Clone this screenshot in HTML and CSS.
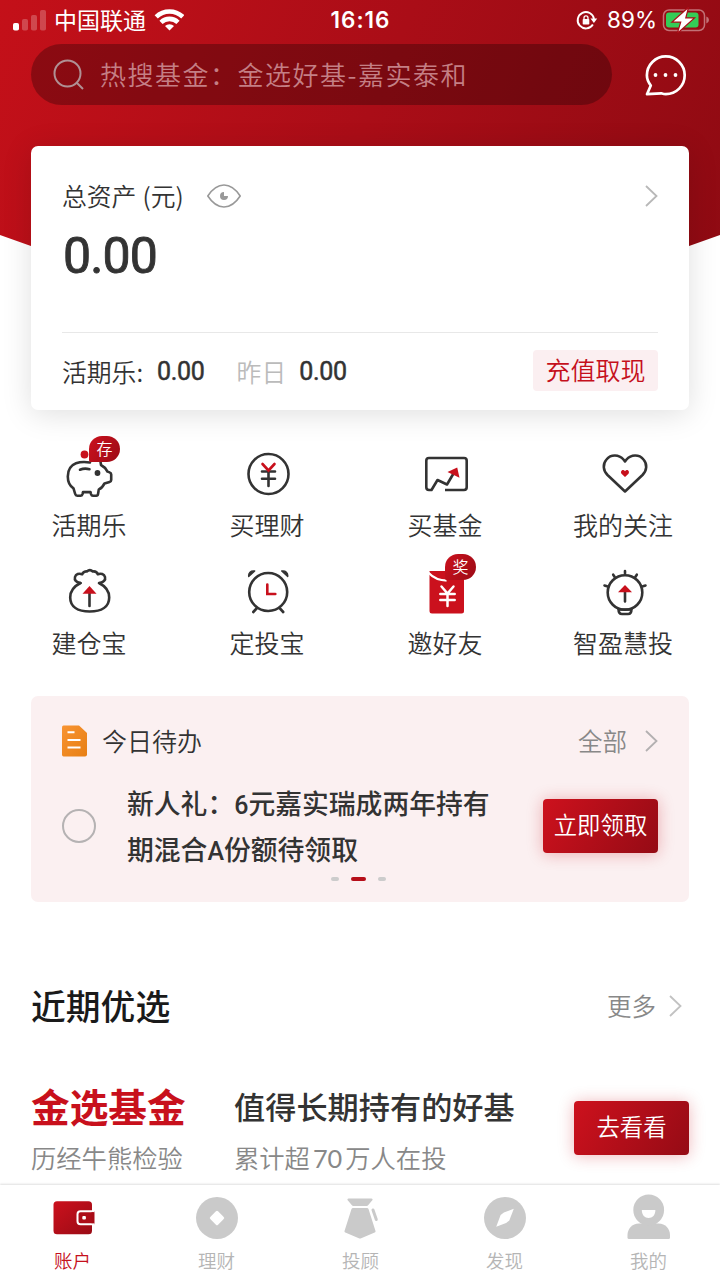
FILE: index.html
```html
<!DOCTYPE html>
<html lang="zh-CN">
<head>
<meta charset="utf-8">
<title>账户</title>
<link rel="stylesheet" href="styles.css">
</head>
<body>
<div class="app">
  <div class="backdrop"></div>

  <header class="status">
    <div class="status-side">
      <svg class="ic" width="36" height="24" viewBox="11 7 36 24">
        <rect x="13" y="22" width="6" height="7.5" rx="1.8" fill="#fff"/>
        <g fill="#fff" opacity=".23"><rect x="22" y="18" width="6" height="11.5" rx="1.8"/><rect x="31" y="14" width="6" height="15.5" rx="1.8"/><rect x="40" y="9" width="6" height="20.500" rx="1.8"/></g>
      </svg>
      <span class="carrier">中国联通</span>
      <svg class="ic" width="30" height="24" viewBox="155 7.500 30 24" fill="none" stroke="#fff" stroke-width="4.600">
        <path d="M157.200 16.300a19.300 19.300 0 0 1 26.600 0"/>
        <path d="M162 21.800a12.300 12.300 0 0 1 17 0"/>
        <path d="M170.500 30l-4.500-4.400a6.300 6.300 0 0 1 9 0z" fill="#fff" stroke="none"/>
      </svg>
    </div>
    <span class="clock">16:16</span>
    <div class="status-side status-right">
      <svg class="ic" width="24" height="22" viewBox="576 9 24 22" fill="none" stroke="#fff" stroke-width="1.900">
        <path d="M593.900 24.500A8.200 8.200 0 1 1 595 19"/>
        <path d="M591.500 18.500h6.700l-3.300 4.500z" fill="#fff" stroke="none"/>
        <rect x="583.700" y="19" width="6.600" height="5.500" rx=".8" fill="#fff" stroke="none"/>
        <path d="M585 19.500v-1.600a2 2 0 0 1 4 0v1.600" stroke-width="1.300"/>
      </svg>
      <span class="percent">89%</span>
      <svg class="ic" width="49" height="26" viewBox="661 6.500 49 26">
        <rect x="663.500" y="9.500" width="41" height="20.500" rx="5.500" fill="none" stroke="#fff" stroke-opacity=".42" stroke-width="1.500"/>
        <path d="M706.300 16v7q2.700-.8 2.700-3.500t-2.700-3.500z" fill="#fff" opacity=".42"/>
        <rect x="666" y="12" width="32.500" height="15" rx="3" fill="#34cc56"/>
        <path d="M687.500 8.500l-14 12.500h8l-3 10 14.500-13h-8z" fill="#fff" stroke="#a90d17" stroke-width="2.400" paint-order="stroke"/>
      </svg>
    </div>
  </header>

  <div class="search-row">
    <div class="search">
      <svg class="ic" width="34" height="34" viewBox="52 58 34 34" fill="none" stroke="#b09094" stroke-width="2">
        <circle cx="67.500" cy="73.500" r="13"/><path d="M77 83l6 6"/>
      </svg>
      <span>热搜基金：金选好基-嘉实泰和</span>
    </div>
    <svg class="ic" width="44" height="44" viewBox="644.500 53 44 44" fill="none" stroke="#fff" stroke-width="2.700" stroke-linejoin="round">
      <path d="M651.300 85.500C648.500 82 647.400 79 647.400 75.300a18.900 18.900 0 1 1 18.900 18.900c-1.700 0-3-.4-4.600-.9l-14.200.9z"/>
      <g fill="#fff" stroke="none"><circle cx="656" cy="75" r="1.900"/><circle cx="666" cy="75" r="1.900"/><circle cx="676" cy="75" r="1.900"/></g>
    </svg>
  </div>

  <section class="asset">
    <div class="asset-head">
      <span class="asset-title">总资产<i class="paren">(</i>元<i class="paren">)</i></span>
      <svg class="ic" width="36" height="26" viewBox="206 183 36 26" fill="none" stroke="#999" stroke-width="1.600">
        <path d="M207.800 196q7.200-11 16.200-11t16.200 11q-7.200 11-16.200 11t-16.200-11z" stroke-linejoin="round"/>
        <path d="M224 192a4 4 0 1 0 4 4h-4z" fill="#999" stroke="none"/>
      </svg>
      <svg class="ic push" width="14" height="24" viewBox="644 184 14 24" fill="none" stroke="#b8b8b8" stroke-width="1.800"><path d="M646 186l10.500 10-10.500 10"/></svg>
    </div>
    <div class="total">0.00</div>
    <div class="asset-foot">
      <span class="lift">活期乐:</span><span class="num first">0.00</span>
      <span class="muted lift">昨日</span><span class="num">0.00</span>
      <button class="cash">充值取现</button>
    </div>
  </section>

  <nav class="shortcuts">
    <a class="shortcut">
      <svg class="ic" width="60" height="60" viewBox="59 443 60 60" fill="none" stroke="#333" stroke-width="2.600" stroke-linejoin="round" stroke-linecap="round">
        <path d="M90 462.500c-4-.7-10-.7-14 .8-5 2-8.200 7-8.200 13.200 0 5 2 9.500 5.700 11.800l1.700 5.700q.5 1.700 2 1.700h3.300q1.500 0 2-1.600l.5-2h7.500l.5 2q.5 1.600 2 1.600h3.300q1.500 0 1.700-1.500l.8-4.800c2.500-1 4.500-3.500 5.700-6l5-1.500q1.700-.5 1.700-2v-5.300q0-1.800-1.500-2.200l-2.200-.8c-1.500-3-4-5.300-6.500-6.600l-.6-4"/>
        <path d="M80 469.700q4.500-1.800 9.500-.5"/>
        <circle cx="97.500" cy="473" r="2.900" fill="#333" stroke="none"/><circle cx="84.500" cy="454.500" r="3.900" fill="#c8101c" stroke="none"/>
      </svg>
      <b class="badge">存</b>
      <span>活期乐</span>
    </a>
    <a class="shortcut">
      <svg class="ic" width="60" height="60" viewBox="237 443 60 60" fill="none" stroke="#333" stroke-width="2.600" stroke-linecap="round">
        <circle cx="268.500" cy="474" r="20"/>
        <path d="M262 471.500h13M262 478.800h13M268.500 471.500v14.500"/><path d="M262.500 464l6 6.500 6-6.500" stroke="#c8101c"/>
      </svg>
      <span>买理财</span>
    </a>
    <a class="shortcut">
      <svg class="ic" width="60" height="60" viewBox="415 443 60 60" fill="none" stroke="#333" stroke-width="2.600" stroke-linejoin="round">
        <path d="M445 490h19q2.700 0 2.700-2.700v-26.600q0-2.700-2.700-2.700h-35q-2.700 0-2.700 2.700v26.600q0 2.700 2.700 2.700h2.500l6-10 9.500 4.500 6.500-11"/>
        <path d="M447.500 472l9.700-4.500 2.300 10.200z" fill="#c8101c" stroke="none"/>
      </svg>
      <span>买基金</span>
    </a>
    <a class="shortcut">
      <svg class="ic" width="60" height="60" viewBox="593 443 60 60" fill="none" stroke="#333" stroke-width="2.600" stroke-linejoin="round">
        <path d="M625 491.500L607.500 475C603 470.500 602.500 464 606.500 459.500c4.500-5.500 12.500-5 17 0l1.500 2 1.500-2c4.500-5 12.500-5.500 17 0 4 4.500 3.500 11-1 15.500z"/>
        <path d="M625 477l-3.500-3.300c-1.800-2.700 1.700-5.200 3.500-2.500 1.800-2.700 5.300-.2 3.500 2.500z" fill="#c8101c" stroke="none"/>
      </svg>
      <span>我的关注</span>
    </a>
    <a class="shortcut">
      <svg class="ic" width="60" height="60" viewBox="59 561 60 60" fill="none" stroke="#333" stroke-width="2.600" stroke-linejoin="round" stroke-linecap="round">
        <path d="M80.500 583c-4.500-.5-6.300-3-5.500-6 .8-3 4-4 7.200-2.800 1-2.700 3.800-3 4.600-2.700 2-1.700 4.200-1.700 6 0 1.800-.3 4 .3 5 2.700 3-1.200 6.400-.2 7.200 2.800.8 3-1.500 5.500-5.500 6"/>
        <path d="M80.500 583c-6 3-10.300 8.500-10.300 14.500 0 9.300 7.600 14 19.500 14s19.500-4.700 19.500-14c0-6-4.200-11.500-10.200-14.500"/>
        <path d="M89.500 593v13"/><path d="M89.500 586l7 7.700h-14z" fill="#c8101c" stroke="none"/>
      </svg>
      <span>建仓宝</span>
    </a>
    <a class="shortcut">
      <svg class="ic" width="60" height="60" viewBox="237 561 60 60" fill="none" stroke="#333" stroke-width="2.600" stroke-linecap="round">
        <circle cx="268.200" cy="592" r="19"/><path d="M256.500 608.500l-3.200 3.500M280 608.500l3.200 3.500"/>
        <path d="M248.700 576.500c-.5-3.500 2-6.200 6-5.500zM287.700 576.500c.5-3.500-2-6.200-6-5.500z" fill="#333" stroke-width="1.400" stroke-linejoin="round"/>
        <path d="M267.300 584.500v9.500h8" stroke="#c8101c"/>
      </svg>
      <span>定投宝</span>
    </a>
    <a class="shortcut">
      <svg class="ic" width="60" height="60" viewBox="414.500 561 60 60">
        <path d="M431.500 571h30q2 0 2 2v38q0 2.500-2.500 2.500h-29.500q-2.500 0-2.500-2.500v-40z" fill="#cb111d"/>
        <path d="M428 572.800q7.500 8.200 20 7.700h15" fill="none" stroke="#fff" stroke-width="2.200"/>
        <path d="M446 578h17.500v5h-17.500z" fill="#cb111d"/>
        <path d="M441 586.500l6 7 6-7M439.800 594h14.400M439.800 600h14.400M447 593v13" fill="none" stroke="#fff" stroke-width="2.500" stroke-linecap="round"/>
      </svg>
      <b class="badge">奖</b>
      <span>邀好友</span>
    </a>
    <a class="shortcut">
      <svg class="ic" width="60" height="60" viewBox="593 561 60 60" fill="none" stroke="#333" stroke-width="2.600" stroke-linecap="round">
        <circle cx="625" cy="592.500" r="17.300"/><path d="M618.500 609q0 5 3.500 5h6q3.500 0 3.500-5M620 609.500h10"/>
        <path d="M625 571v2.500M613.200 574.700l1.500 2.300M636.800 574.700l-1.500 2.300M604.500 585.500l2.500.8M645.500 585.500l-2.500.8M625 592v9.500"/>
        <path d="M625 585l7 7.200h-14z" fill="#c8101c" stroke="none"/>
      </svg>
      <span>智盈慧投</span>
    </a>
  </nav>

  <section class="todo">
    <div class="todo-head">
      <svg class="ic" width="26" height="32" viewBox="62 725.500 26 32">
        <defs><linearGradient id="og" x1="0" y1="0" x2="1" y2="1"><stop offset="0" stop-color="#f89432"/><stop offset="1" stop-color="#e77f14"/></linearGradient></defs>
        <path d="M63.500 726h15.500l8 7.500v21.500q0 2-2 2h-21.500q-1.500 0-1.500-2v-27q0-2 1.500-2z" fill="url(#og)"/>
        <path d="M67.500 732.800h7M67.500 740.500h13M67.500 748h13" stroke="#fff" stroke-width="2"/>
      </svg>
      <span class="todo-title lift">今日待办</span>
      <a class="more lift">全部</a>
      <svg class="ic" width="14" height="24" viewBox="644 184 14 24" fill="none" stroke="#b3b0b1" stroke-width="1.800"><path d="M646 186l10.500 10-10.500 10"/></svg>
    </div>
    <div class="todo-body">
      <i class="radio"></i>
      <p>新人礼：<i class="latin">6</i>元嘉实瑞成两年持有<br>期混合<i class="latin">A</i>份额待领取</p>
      <button class="primary claim">立即领取</button>
    </div>
    <div class="dots"><i></i><i class="on"></i><i></i></div>
  </section>

  <section class="picks">
    <div class="picks-head">
      <h2>近期优选</h2>
      <a class="more lift">更多</a>
      <svg class="ic" width="14" height="24" viewBox="644 184 14 24" fill="none" stroke="#c2c2c2" stroke-width="1.800"><path d="M646 186l10.500 10-10.500 10"/></svg>
    </div>
    <div class="pick">
      <div class="pick-name"><strong>金选基金</strong><small>历经牛熊检验</small></div>
      <div class="pick-desc"><strong>值得长期持有的好基</strong><small>累计超<i class="count">70</i>万人在投</small></div>
      <button class="primary">去看看</button>
    </div>
  </section>

  <footer class="tabs">
    <a class="tab active">
      <svg class="ic" width="48" height="48" viewBox="49.500 1193 48 48">
        <defs><linearGradient id="rg" x1="0" y1="0" x2="1" y2="1"><stop offset="0" stop-color="#cc111d"/><stop offset="1" stop-color="#9a0b15"/></linearGradient></defs>
        <rect x="54" y="1201.200" width="38.500" height="33" rx="3.500" fill="url(#rg)"/>
        <path d="M95 1211.200h-14q-3 0-3 3v7q0 3 3 3h14" fill="#ad0d18" stroke="#fff" stroke-width="2"/>
        <rect x="92" y="1212.200" width="2.300" height="11" fill="#a80c17"/><rect x="82.800" y="1216" width="3.600" height="3.600" rx="1" fill="#fff"/>
      </svg><span>账户</span></a>
    <a class="tab"><svg class="ic" width="48" height="48" viewBox="193 1193 48 48"><circle cx="217" cy="1218" r="21" fill="#cacaca"/><rect x="211.500" y="1212.500" width="11" height="11" rx="1.500" transform="rotate(45 217 1218)" fill="#fff"/></svg><span>理财</span></a>
    <a class="tab"><svg class="ic" width="48" height="48" viewBox="337 1193 48 48" fill="#cacaca">
      <path d="M348.500 1198.500h23q1.500 0 1 1.500l-4.200 5q-.6.900-1.700.9h-13.200q-1 0-1.700-.9l-4.200-5q-.5-1.500 1-1.500z"/>
      <path d="M353 1208h14q1 0 1.500 1l7 22q.3 1-.8 1.500l-13.500 5.700q-1.200.5-2.400 0l-13.500-5.700q-1.100-.5-.8-1.500l7-22q.5-1 1.500-1z"/>
      <path d="M373 1210l3.300 9.500" stroke="#cacaca" stroke-width="3" stroke-linecap="round"/></svg><span>投顾</span></a>
    <a class="tab"><svg class="ic" width="48" height="48" viewBox="481 1193 48 48"><circle cx="505" cy="1218" r="21" fill="#cacaca"/><path d="M513.800 1208.800l-4.500 11.800-3.200 2.500-9.900 3.600 4.400-11.600 3.300-2.600z" fill="#fff"/></svg><span>发现</span></a>
    <a class="tab"><svg class="ic" width="48" height="48" viewBox="625 1193 48 48" fill="#cacaca">
      <path d="M639 1223.500h19.500c7 0 11.500 5.500 11.500 11.500v2.500q0 1.500-1.500 1.500h-39.500q-1.500 0-1.500-1.500v-2.500c0-6 4.500-11.500 11.500-11.500z"/><circle cx="648.700" cy="1210" r="15.400"/><path d="M641.800 1210h13.600c0 5-3 8-6.800 8s-6.800-3-6.800-8z" fill="#fff"/></svg><span>我的</span></a>
  </footer>
</div>
</body>
</html>
```
FILE: styles.css
```css
* { box-sizing: border-box; }
body {
  margin: 0;
  background: #fff;
  color: #333;
  font-family: "Noto Sans CJK SC", sans-serif;
}
i { font-style: normal; }
a, span { white-space: nowrap; }
button { border: 0; padding: 0; font-family: inherit; white-space: nowrap; }
.ic { display: block; flex: none; }
.lift { padding-bottom: 2px; }

.app {
  position: relative;
  width: 720px;
  height: 1280px;
  overflow: hidden;
  display: flex;
  flex-direction: column;
}
.app > * { position: relative; flex: none; }
.app > .backdrop {
  position: absolute;
  inset: 0 0 auto;
  height: 363px;
  background: linear-gradient(112deg, #c41019 0%, #aa0d17 48%, #8c0a12 100%);
  clip-path: polygon(0 0, 100% 0, 100% 235px, 50% 100%, 0 235px);
}

.status {
  display: grid;
  grid-template-columns: 1fr auto 1fr;
  align-items: center;
  height: 40px;
  padding: 0 10px 0 11px;
  color: #fff;
  line-height: 40px;
}
.status-side { display: flex; align-items: center; height: 40px; }
.status-right { justify-content: flex-end; }
.carrier { margin: 0 8px 0 7px; padding-bottom: 2px; font-size: 23px; line-height: 38px; }
.clock { font-family: Inter, sans-serif; font-size: 22.500px; font-weight: 600; letter-spacing: 1px; }
.percent { margin: 0 4px 0 8px; font-family: Inter, sans-serif; font-size: 22.500px; }

.search-row {
  display: flex;
  align-items: center;
  justify-content: space-between;
  height: 61px;
  margin: 4px 32px 0 31px;
}
.search {
  display: flex;
  align-items: center;
  gap: 14px;
  width: 581px;
  height: 61px;
  padding-left: 21px;
  border-radius: 31px;
  background: rgba(0, 0, 0, .28);
  color: #c47f85;
  font-size: 26px;
  font-weight: 350;
  letter-spacing: 1.500px;
}
.search span { padding-bottom: 3px; }

.asset {
  height: 264px;
  margin: 41px 31px 0;
  padding: 30px 31px 0;
  border-radius: 7px;
  background: #fff;
  box-shadow: 0 4px 30px rgba(0, 0, 0, .13);
}
.asset-head { display: flex; align-items: center; height: 40px; }
.asset-title { width: 144px; padding-bottom: 3px; font-size: 24.800px; font-weight: 350; }
.paren { margin-left: 6px; }
.paren:last-child { margin-left: 0; }
.push { margin-left: auto; }
.total {
  height: 116px;
  padding-left: 1px;
  font: 400 50px/80px Roboto, sans-serif;
  letter-spacing: -.9px;
  -webkit-text-stroke: .9px #333;
}
.asset-foot {
  display: flex;
  align-items: center;
  height: 78px;
  border-top: 1px solid #e8e8e8;
  font-size: 24.800px;
  font-weight: 350;
}
.num {
  padding-top: 1px;
  font: 400 25px/40px Roboto, sans-serif;
  letter-spacing: -.3px;
  -webkit-text-stroke: .5px #333;
}
.num.first { margin: 0 32px 0 14px; }
.muted { margin-right: 13px; color: #bbb; }
.cash {
  width: 125px;
  height: 41px;
  margin: 0 0 2px auto;
  padding-bottom: 2px;
  border-radius: 4px;
  background: #fbeff1;
  color: #c5101c;
  font-size: 25px;
  font-weight: 350;
  line-height: 39px;
}

.shortcuts {
  display: grid;
  grid-template-columns: repeat(4, 178px);
  grid-auto-rows: 118px;
  margin-top: 33px;
}
.shortcut {
  position: relative;
  display: flex;
  flex-direction: column;
  align-items: center;
  font-size: 25px;
  font-weight: 350;
  line-height: 43px;
}
.badge {
  position: absolute;
  top: -7px;
  left: 89px;
  height: 26px;
  width: 31px;
  border-radius: 14px 14px 14px 2px;
  background: linear-gradient(120deg, #cb111d, #9c0b16);
  color: #fff;
  font-size: 16px;
  font-weight: 350;
  line-height: 24px;
  text-align: center;
}

.todo {
  height: 206px;
  margin: 17px 31px 0;
  padding: 25px 31px 0;
  border-radius: 7px;
  background: #fbf0f1;
}
.todo-head { display: flex; align-items: center; height: 40px; }
.todo-title { margin-left: 14px; font-size: 25px; font-weight: 350; }
.more { margin-left: auto; margin-right: 17px; color: #888; font-size: 24.500px; font-weight: 350; }
.todo-body { display: flex; align-items: center; height: 92px; margin-top: 19px; }
.radio { width: 34px; height: 34px; border: 2px solid #b5b2b3; border-radius: 50%; }
.todo-body p { margin: 0 0 0 31px; padding-bottom: 1px; font-size: 26.800px; font-weight: 500; line-height: 46px; white-space: nowrap; }
.latin { font-family: Roboto, sans-serif; font-size: 25px; line-height: 0; }
.primary {
  width: 115px;
  height: 54px;
  margin-left: auto;
  padding-bottom: 3px;
  border-radius: 4px;
  background: linear-gradient(120deg, #cd111d, #950b15);
  box-shadow: 0 1px 16px rgba(200, 16, 28, .3);
  color: #fff;
  font-size: 23.400px;
  font-weight: 350;
  line-height: 51px;
}
.dots { display: flex; align-items: center; justify-content: center; gap: 12px; height: 14px; padding-right: 4px; }
.dots i { width: 8px; height: 4px; border-radius: 2px; background: #ccc; }
.dots .on { width: 15px; background: #b60e19; }

.picks { height: 282px; padding: 81px 31px 0; }
.picks-head { display: flex; align-items: center; height: 46px; padding-right: 7px; }
h2 { margin: 0; padding-bottom: 2px; color: #1a1a1a; font-size: 34.800px; font-weight: 500; line-height: 44px; }
.picks-head .more { margin-right: 12px; }
.pick { display: flex; align-items: center; height: 100px; margin-top: 49px; }
.pick strong, .pick small { display: block; white-space: nowrap; }
.pick-name { width: 203px; }
.pick-name strong { color: #c8101c; font-size: 38.700px; font-weight: 700; line-height: 54px; }
.pick-desc strong { font-size: 31.200px; font-weight: 500; line-height: 55px; }
.pick small { margin: 2px 0 -2px; color: #888; font-size: 25.300px; font-weight: 350; line-height: 46px; }
.pick-desc small { line-height: 45px; }
.count { margin: 0 3px; font-family: Lato, sans-serif; font-weight: 400; line-height: 0; }

.tabs {
  display: grid;
  grid-template-columns: repeat(5, 144px);
  height: 96px;
  margin-top: 1px;
  padding: 8px 0 0 1px;
  background: #fff;
  box-shadow: 0 -1px 2px rgba(0, 0, 0, .13);
}
.tab {
  display: flex;
  flex-direction: column;
  align-items: center;
  color: #b5b5b5;
  font-size: 18.500px;
  font-weight: 350;
  line-height: 38px;
}
.tab span { padding-right: 1px; }
.tab.active { color: #c5101c; }
```
